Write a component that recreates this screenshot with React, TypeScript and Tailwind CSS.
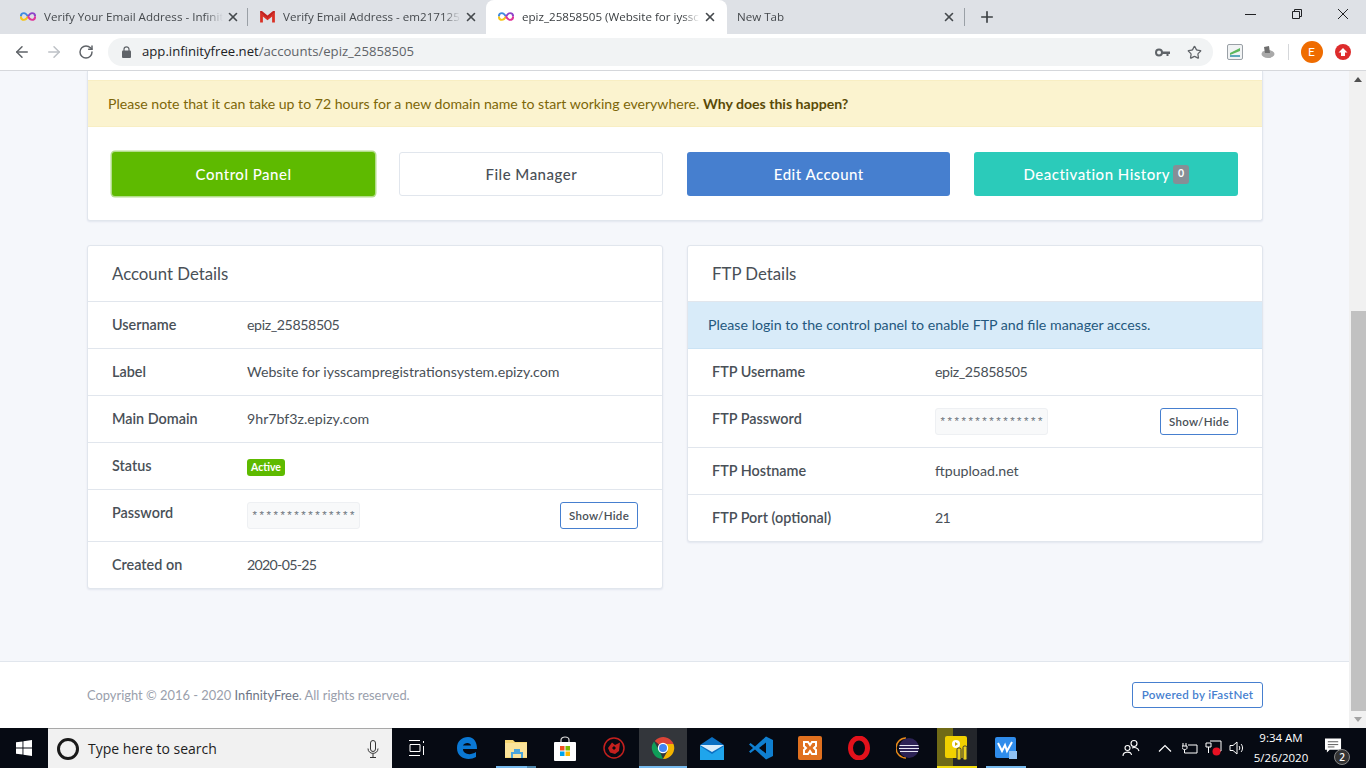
import React from "react";
import { ArrowLeft, ArrowRight, RotateCw, Star, X, Plus } from "lucide-react";

const Inf = () => (
  <svg width="16" height="9" viewBox="0 0 18 10" fill="none" strokeWidth="2.200">
    <path d="M9 5C7.500 2.500 6 1.200 4.400 1.200 2.400 1.200 1 2.900 1 5" stroke="#3f8ae0" />
    <path d="M1 5c0 2.100 1.400 3.800 3.400 3.800C6 8.800 7.500 7.500 9 5" stroke="#f5c518" />
    <path d="M9 5c1.500-2.500 3-3.800 4.600-3.800C15.600 1.200 17 2.900 17 5" stroke="#8e44c9" />
    <path d="M17 5c0 2.100-1.400 3.800-3.400 3.800C12 8.800 10.500 7.500 9 5" stroke="#e0359a" />
  </svg>
);

const Gmail = () => (
  <svg width="15" height="12" viewBox="0 0 16 13">
    <path d="M0 1.500 8 7.500 16 1.500V12.500H13V6L8 10 3 6V12.500H0Z" fill="#d93025" />
    <path d="M0 0H2L8 5 14 0H16V2L8 8 0 2Z" fill="#c5221f" />
  </svg>
);

function Tab({ w, icon, label, active, sep, gap, xr }: { w: string; icon?: React.ReactNode; label: string; active?: boolean; sep?: boolean; gap: string; xr: string }) {
  return (
    <div className={`${w} relative flex h-[34px] shrink-0 items-center ${active ? "rounded-t-lg bg-white text-[#3c4043]" : "text-[#45494d]"}`}>
      <div className={`flex min-w-0 flex-1 items-center ${gap}`}>
        {icon}
        <span className="min-w-0 flex-1 overflow-hidden whitespace-nowrap text-[11.600px] [mask-image:linear-gradient(to_right,black_90%,transparent)]">{label}</span>
      </div>
      <X size={14} strokeWidth={2.800} className={`ml-[3px] ${xr} shrink-0 text-[#45494d]`} />
      {sep && <div className="absolute right-[-1px] top-[8px] h-[18px] w-px bg-[#9aa0a6]" />}
    </div>
  );
}

function Row({ label, labelW, h, children, last, up }: { label: string; labelW: string; h: string; children: React.ReactNode; last?: boolean; up?: boolean }) {
  return (
    <div className={`flex ${h} items-center px-6 ${last ? "" : "border-b border-[#e1e6ed]"}`}>
      <div className={`${labelW} shrink-0 text-[14.400px] font-semibold ${up ? "-mt-[6px]" : ""}`}>{label}</div>
      <div className="flex flex-1 items-center justify-between">{children}</div>
    </div>
  );
}

function Secret() {
  return (
    <>
      <code className="flex h-[27px] w-[113px] items-center justify-center rounded-[3px] border border-[#eef0f3] bg-[#f8f9fa] font-['Liberation_Mono',monospace] text-[11.600px] text-[#6c757d]">***************</code>
      <button className="h-[27px] w-[78px] rounded-[3px] border border-[#467fcf] bg-white text-[11.500px] font-semibold tracking-[0.3px] text-[#495057]">Show/Hide</button>
    </>
  );
}

function Btn({ cls, children }: { cls: string; children: React.ReactNode }) {
  return <button className={`flex h-[44px] items-center justify-center gap-[3px] rounded-[3px] text-[15px] font-medium tracking-[0.5px] ${cls}`}>{children}</button>;
}

function Card({ title, children }: { title: string; children: React.ReactNode }) {
  return (
    <section className="rounded-[3px] border border-[#e1e6ed] bg-white shadow-[0_1px_2px_rgba(0,40,100,0.08)]">
      <div className="flex h-[56px] items-center border-b border-[#e1e6ed] px-6 pt-[1px] text-[16.800px] text-[#495057]">{title}</div>
      {children}
    </section>
  );
}

const Cell = ({ w, active, bar, children }: { w?: string; active?: boolean; bar?: boolean; children: React.ReactNode }) => (
  <div className={`relative flex h-full ${w ?? "w-[49px]"} shrink-0 items-center justify-center ${active ? "bg-[#33363b]" : ""}`}>
    {children}
    {bar && <div className="absolute inset-x-0 bottom-0 h-[2px] bg-[#76b9ed]" />}
  </div>
);

export default function App() {
  return (
    <div className="flex h-[768px] w-[1366px] flex-col overflow-hidden bg-white font-['Lato',sans-serif] text-[14.200px] text-[#495057]">
      {/* tab strip */}
      <div className="flex h-[34px] shrink-0 items-center bg-[#dee1e6] font-['Open_Sans',sans-serif]">
        <div className="w-[8px] shrink-0" />
        <Tab w="w-[239px]" gap="gap-[8px] pl-[12px]" xr="mr-[7px]" icon={<Inf />} label="Verify Your Email Address - Infinit" sep />
        <Tab w="w-[239px]" gap="gap-[8px] pl-[13px]" xr="mr-[8px]" icon={<Gmail />} label="Verify Email Address - em217125" />
        <Tab w="w-[241px]" gap="gap-[8px] pl-[12px]" xr="mr-[10px]" icon={<Inf />} label="epiz_25858505 (Website for iyssc" active />
        <Tab w="w-[237px]" gap="pl-[10px]" xr="mr-[8px]" label="New Tab" sep />
        <Plus size={18} strokeWidth={2.200} className="ml-[14px] text-[#3c4043]" />
        <div className="-mt-[6px] ml-auto flex items-center pr-[18px]">
          <svg width="11" height="10" viewBox="0 0 11 10" className="mr-[36px]"><path d="M0 5.500H11" stroke="#202124" /></svg>
          <svg width="10" height="10" viewBox="0 0 10 10" fill="none" stroke="#202124" className="mr-[36px]"><path d="M.5 2.500H7.500V9.500H.5ZM2.500 2.500V.5H9.500V7.500H7.500" /></svg>
          <svg width="10" height="10" viewBox="0 0 10 10" fill="none" stroke="#202124"><path d="M0 0 10 10M10 0 0 10" /></svg>
        </div>
      </div>

      {/* toolbar */}
      <div className="flex h-[37px] shrink-0 items-center border-b border-[#d6d8dc] bg-white">
        <ArrowLeft size={18} strokeWidth={2} className="ml-[13px] text-[#5f6368]" />
        <ArrowRight size={18} strokeWidth={2} className="ml-[14px] text-[#bdc1c6]" />
        <RotateCw size={16} strokeWidth={2.200} className="ml-[15px] text-[#5f6368]" />
        <div className="ml-[14px] flex h-[28px] w-[1105px] items-center rounded-full bg-[#f1f3f4] pl-[14px] pr-[10px]">
          <svg width="9" height="12" viewBox="0 0 9 12" fill="#5f6368"><path d="M2 5V3.200C2 0 7 0 7 3.200V5" fill="none" stroke="#5f6368" strokeWidth="1.200" /><rect y="4.500" width="9" height="7.500" rx="1" /></svg>
          <span className="ml-[11px] font-['Open_Sans',sans-serif] text-[13.150px] text-[#5f6368]"><span className="text-[#202124]">app.infinityfree.net</span>/accounts/epiz_25858505</span>
          <svg width="15" height="9" viewBox="0 0 15 9" className="ml-auto mr-[17px]" fill="#5f6368"><circle cx="4" cy="4.500" r="3" fill="none" stroke="#5f6368" strokeWidth="2" /><path d="M7 3.500H15V6H13.500V8H11.500V6H7Z" /></svg>
          <Star size={15} strokeWidth={2} className="mr-[1px] text-[#5f6368]" />
        </div>
        <svg width="16" height="16" viewBox="0 0 16 16" className="ml-[14px]"><rect x=".5" y=".5" width="15" height="15" rx="1.500" fill="#f1f3f4" stroke="#9aa0a6" /><path d="M3 9 13 4V7L3 11Z" fill="#5cb85c" /><path d="M3 12H13" stroke="#2b8fa8" strokeWidth="1.500" /></svg>
        <svg width="16" height="14" viewBox="0 0 16 14" className="ml-[16px]"><ellipse cx="9" cy="9" rx="6.500" ry="4" fill="#a9a9a9" /><path d="M5 2 10 1 11 8H6Z" fill="#6f6f6f" /></svg>
        <div className="ml-[13px] h-[16px] w-px bg-[#d5d7da]" />
        <div className="ml-[11.500px] flex h-[22px] w-[22px] items-center justify-center rounded-full bg-[#ef6c00] text-[12px] text-white">E</div>
        <div className="ml-[12.500px] flex h-[16px] w-[16px] items-center justify-center rounded-full bg-[#dd2c2c]">
          <svg width="10" height="10" viewBox="0 0 10 10"><path d="M5 1 9.500 5.500H7V9H3V5.500H.5Z" fill="#fff" /></svg>
        </div>
      </div>

      {/* page + scrollbar */}
      <div className="flex min-h-0 flex-1">
        <div className="flex w-[1349px] shrink-0 flex-col bg-[#f5f7fb]">
          <div className="ml-[87px] w-[1176px]">
            <div className="rounded-b-[3px] border-x border-b border-[#e1e6ed] bg-white pt-[9px] shadow-[0_1px_2px_rgba(0,40,100,0.08)]">
              <div className="flex h-[47px] items-center border-y border-[#f8eec3] bg-[#fbf3cf] px-5 text-[14.100px] text-[#7d6608]">
                <span>Please note that it can take up to 72 hours for a new domain name to start working everywhere. <b className="font-bold text-[#5a4a06]">Why does this happen?</b></span>
              </div>
              <div className="grid grid-cols-[263.500px_264px_263px_264px] gap-6 pb-6 pl-[23.800px] pt-[25px]">
                <Btn cls="bg-[#5eba00] text-white ring-[1.500px] ring-[#b3dd8a]">Control Panel</Btn>
                <Btn cls="border border-[#e1e6ed] bg-white text-[#495057]">File Manager</Btn>
                <Btn cls="bg-[#467fcf] text-white">Edit Account</Btn>
                <Btn cls="bg-[#2bcbba] text-white">Deactivation History <span className="flex h-[19px] w-[16px] items-center justify-center rounded-[3px] bg-[#868e96] text-[10.500px] font-bold tracking-normal">0</span></Btn>
              </div>
            </div>
            <div className="mt-[24px] grid grid-cols-2 items-start gap-6">
              <Card title="Account Details">
                <Row h="h-[47px]" labelW="w-[135px]" label="Username"><span className="tracking-[-0.4px]">epiz_25858505</span></Row>
                <Row h="h-[47px]" labelW="w-[135px]" label="Label">Website for iysscampregistrationsystem.epizy.com</Row>
                <Row h="h-[47px]" labelW="w-[135px]" label="Main Domain">9hr7bf3z.epizy.com</Row>
                <Row h="h-[47px]" labelW="w-[135px]" label="Status"><span className="mt-[2px] rounded-[3px] bg-[#5eba00] px-[4px] py-[1px] text-[10.500px] font-bold leading-[15px] text-white">Active</span></Row>
                <Row h="h-[52px]" labelW="w-[135px]" label="Password" up><Secret /></Row>
                <Row h="h-[46px]" labelW="w-[135px]" label="Created on" last><span className="tracking-[-0.7px]">2020-05-25</span></Row>
              </Card>
              <Card title="FTP Details">
                <div className="flex h-[47px] items-center border-b border-[#cbe3f5] bg-[#d8ebf9] px-5 text-[#24587e]">Please login to the control panel to enable FTP and file manager access.</div>
                <Row h="h-[47px]" labelW="w-[223px]" label="FTP Username"><span className="tracking-[-0.4px]">epiz_25858505</span></Row>
                <Row h="h-[52px]" labelW="w-[223px]" label="FTP Password" up><Secret /></Row>
                <Row h="h-[47px]" labelW="w-[223px]" label="FTP Hostname">ftpupload.net</Row>
                <Row h="h-[46px]" labelW="w-[223px]" label="FTP Port (optional)" last><span className="tracking-[-0.7px]">21</span></Row>
              </Card>
            </div>
          </div>
          <footer className="mt-auto flex h-[67px] items-center border-t border-[#e1e6ed] bg-white pl-[87px] pr-[86px] text-[12.900px] text-[#9aa0ac]">
            <span className="mt-[1px]">Copyright © 2016 - 2020 <span className="text-[#6e7687]">InfinityFree</span>. All rights reserved.</span>
            <button className="ml-auto h-[26px] w-[131px] rounded-[3px] border border-[#467fcf] text-[11.600px] font-semibold tracking-[0.3px] text-[#467fcf]">Powered by iFastNet</button>
          </footer>
        </div>
        <div className="flex w-[17px] shrink-0 flex-col bg-[#f1f1f1]">
          <div className="flex h-[17px] items-center justify-center">
            <svg width="8" height="5" viewBox="0 0 8 5"><path d="M4 0 8 5H0Z" fill="#505050" /></svg>
          </div>
          <div className="mt-[223px] h-[401px] w-[15px] self-end bg-[#c1c1c1]" />
          <div className="mt-auto flex h-[17px] items-center justify-center">
            <svg width="8" height="5" viewBox="0 0 8 5"><path d="M0 0H8L4 5Z" fill="#a3a3a3" /></svg>
          </div>
        </div>
      </div>

      {/* taskbar */}
      <div className="flex h-[40px] shrink-0 items-center bg-[#060a13] font-['Open_Sans',sans-serif] text-white">
        <div className="flex h-full w-[48px] items-center justify-center">
          <svg width="16" height="16" viewBox="0 0 16 16" fill="#fff"><path d="M0 2.300 6.500 1.400V7.600H0ZM7.400 1.300 16 0V7.600H7.400ZM0 8.400H6.500V14.600L0 13.700ZM7.400 8.400H16V16L7.400 14.700Z" /></svg>
        </div>
        <div className="flex h-full w-[344px] items-center border-t border-[#a8a8a8] bg-[#f1f1f1] pl-[9px] pr-[13px] text-[#1e1e1e]">
          <div className="h-[22px] w-[22px] rounded-full border-[3px] border-[#1a1a1a]" />
          <span className="ml-[9px] text-[14px]">Type here to search</span>
          <svg width="12" height="18" viewBox="0 0 12 18" fill="none" stroke="#333" className="ml-auto"><rect x="3.500" y=".5" width="5" height="11" rx="2.500" /><path d="M1 8.500C1 15 11 15 11 8.500M6 14V17M3 17.500H9" /></svg>
        </div>
        <Cell>
          <svg width="16" height="16" viewBox="0 0 16 16" fill="none" stroke="#fff"><path d="M0 .5H11M0 15.500H11M1 4.500H11V11.500H1ZM14.500 1V3M14.500 6V15" /></svg>
        </Cell>
        <Cell w="w-[51px]">
          <svg width="22" height="24" viewBox="0 0 22 24"><path d="M1 12C1 5 6 1 12 1 18 1 21 6 21 13H7C7 18 14 20 20 16V21C13 25 1 23 1 12ZM7 9.500H15C15 6 8 6 7 9.500Z" fill="#0a78d4" /></svg>
        </Cell>
        <Cell w="w-[48px]">
          <svg width="22" height="20" viewBox="0 0 22 20"><path d="M0 2H8L10 4H22V20H0Z" fill="#f7d774" /><path d="M0 5H22V19H0Z" fill="#fbe39a" /><path d="M6 14H9V11H15V14H18V20H6Z" fill="#4aa5dc" /><rect x="8" y="16" width="8" height="4" fill="#fbe39a" /></svg>
          <div className="absolute bottom-0 left-[4px] flex h-[2px] w-[40px]">
            <div className="w-[31px] bg-[#76b9ed]" />
            <div className="w-[9px] bg-[#4f86ab]" />
          </div>
        </Cell>
        <Cell>
          <svg width="22" height="25" viewBox="0 0 22 25"><path d="M7 7V4C7 0 15 0 15 4V7" fill="none" stroke="#ddd" strokeWidth="1.200" /><rect y="6" width="22" height="19" rx="1" fill="#fff" /><rect x="6" y="10" width="4.500" height="4.500" fill="#f25022" /><rect x="11.500" y="10" width="4.500" height="4.500" fill="#7fba00" /><rect x="6" y="15.500" width="4.500" height="4.500" fill="#00a4ef" /><rect x="11.500" y="15.500" width="4.500" height="4.500" fill="#ffb900" /></svg>
        </Cell>
        <Cell w="w-[50px]">
          <svg width="22" height="22" viewBox="0 0 22 22" fill="none"><circle cx="11" cy="11" r="10" stroke="#c4201e" strokeWidth="1.500" /><path d="M5 11 9 5.500 12 8 17 5.500 16 14 12 17 7 15.500Z" fill="#c4201e" /><path d="M9 11 11 9 13 11 11 13Z" fill="#060a13" /></svg>
        </Cell>
        <Cell w="w-[48px]" active bar>
          <svg width="24" height="24" viewBox="0 0 24 24"><path d="M12 12 3.800 5A11 11 0 0 1 22.500 8H12Z" fill="#db4437" /><path d="M12 23A11 11 0 0 1 3 5.500L9 16Z" fill="#0f9d58" /><path d="M12 23A11 11 0 0 0 22.500 8H12L16.500 15Z" fill="#f4b400" /><circle cx="12" cy="12" r="5.200" fill="#fff" /><circle cx="12" cy="12" r="4" fill="#4285f4" /></svg>
        </Cell>
        <Cell>
          <svg width="24" height="24" viewBox="0 0 24 24"><path d="M0 9 12 1 24 9V24H0Z" fill="#0a6fc2" /><path d="M0 9H24L12 16Z" fill="#d9ecfa" /><path d="M0 10 12 18 24 10V24H0Z" fill="#1fa5ec" /></svg>
        </Cell>
        <Cell>
          <svg width="24" height="24" viewBox="0 0 24 24"><path d="M17 .5 24 4V20L17 23.500 6 13.500 1.500 17 0 15.500 4 12 0 8.500 1.500 7 6 10.500ZM17 6.500 10 12 17 17.500Z" fill="#0f7fd0" /></svg>
        </Cell>
        <Cell>
          <div className="flex h-[24px] w-[24px] items-center justify-center rounded-[2px] bg-[#e0701f]">
            <svg width="18" height="18" viewBox="0 0 18 18" fill="none" stroke="#fff" strokeWidth="2"><path d="M3 3H7L9 6 11 3H15V7L13 9 15 11V15H11L9 12 7 15H3V11L5 9 3 7Z" /></svg>
          </div>
        </Cell>
        <Cell>
          <svg width="22" height="24" viewBox="0 0 22 24"><ellipse cx="11" cy="12" rx="8.500" ry="10" fill="none" stroke="#e3111b" strokeWidth="5" /></svg>
        </Cell>
        <Cell>
          <svg width="24" height="24" viewBox="0 0 24 24"><path d="M10 2A10 10 0 0 0 10 22" fill="none" stroke="#e88a1a" strokeWidth="1.500" /><circle cx="13" cy="12" r="10" fill="#2c2255" /><path d="M3.500 9.500H22.500M3 12.500H23M4 15.500H22" stroke="#e8e8f5" strokeWidth="1.200" /></svg>
        </Cell>
        <div className="w-[5px] shrink-0" />
        <div className="relative flex h-full w-[40px] shrink-0 items-center justify-center bg-[#23262b]">
          <div className="absolute inset-y-0 left-0 w-[16px] bg-[#6f6a16]" />
          <div className="absolute inset-x-0 bottom-0 h-[2px] bg-[#f2dc0d]" />
          <svg width="24" height="24" viewBox="0 0 24 24" className="relative"><rect width="22" height="22" rx="2" fill="#f0d000" /><circle cx="11" cy="8" r="4" fill="#fff" /><path d="M10 6 13 8 10 10Z" fill="#c9a800" /><rect x="12" y="12" width="4" height="12" rx="1.500" fill="#e8cf22" stroke="#333" /><rect x="18" y="10" width="4" height="14" rx="1.500" fill="#e8cf22" stroke="#333" /></svg>
        </div>
        <div className="w-[9px] shrink-0" />
        <Cell w="w-[40px]" bar>
          <svg width="22" height="22" viewBox="0 0 22 22"><rect width="21" height="21" rx="2" fill="#2f8ceb" /><path d="M3 6 7 14 10 8 12 14 17 5" fill="none" stroke="#fff" strokeWidth="2" /><rect x="14" y="14" width="8" height="8" fill="#8fc1f2" /></svg>
        </Cell>
        <div className="ml-auto flex h-full items-center pr-[6px]">
          <svg width="18" height="18" viewBox="0 0 18 18" fill="none" stroke="#fff" strokeWidth="1.100" className="mr-[18px]"><circle cx="12" cy="4.500" r="3" /><circle cx="5.500" cy="9" r="2.500" /><path d="M1 17C1 12 9 12 9.500 16M10 9C12 8 16 8.500 17 12" /></svg>
          <svg width="14" height="8" viewBox="0 0 14 8" fill="none" stroke="#fff" strokeWidth="1.200" className="mr-[10px]"><path d="M1 7.500 7 1.500 13 7.500" /></svg>
          <svg width="16" height="13" viewBox="0 0 16 13" fill="none" stroke="#fff" className="mr-[7px]"><path d="M1 1V4M4 1V4M0 4H5V6C5 8 1 8 0 6ZM2.500 8V11H15V3H6" /></svg>
          <svg width="17" height="16" viewBox="0 0 17 16" fill="none" stroke="#fff" className="mr-[7px]"><path d="M5 1H16V11H8M1 3H6V7H1ZM3.500 7V13" /><circle cx="11.500" cy="11.500" r="4" fill="#e81123" stroke="none" /></svg>
          <svg width="16" height="14" viewBox="0 0 16 14" fill="none" stroke="#fff" className="mr-[1px]"><path d="M1 4.500H4L8 1V13L4 9.500H1ZM10 5C11 6 11 8 10 9M12 3C14 5 14 9 12 11" /></svg>
          <div className="flex w-[70px] flex-col items-center text-[11.500px] leading-[20px]">
            <span>9:34 AM</span>
            <span>5/26/2020</span>
          </div>
          <div className="relative ml-[9px] mr-[11px] h-[24px] w-[24px]">
            <svg width="17" height="16" viewBox="0 0 18 16" className="mt-[2px]"><path d="M0 0H17V12H5L2 15V12H0Z" fill="#fff" /><path d="M3 3.500H14M3 6.500H14M3 9H10" stroke="#555" /></svg>
            <div className="absolute bottom-[-5px] right-[-1px] flex h-[16px] w-[16px] items-center justify-center rounded-full border border-[#888] bg-[#333] text-[10px] font-semibold">2</div>
          </div>
        </div>
      </div>
    </div>
  );
}
